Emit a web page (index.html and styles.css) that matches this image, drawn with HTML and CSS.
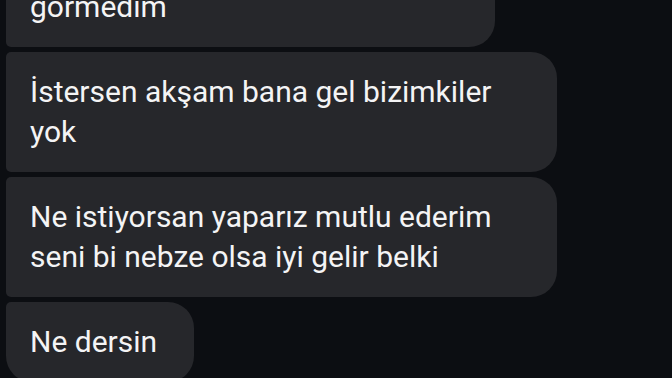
FILE: index.html
```html
<!DOCTYPE html>
<html lang="tr">
<head>
    <meta charset="UTF-8">
    <meta name="viewport" content="width=device-width, initial-scale=1.0">
    <title>Mesajlar</title>
    <link rel="stylesheet" href="styles.css">
</head>
<body>

    <!-- incoming messages, scrolled so the first one is cut off -->
    <div class="thread">
        <div class="bubble first">gormedim</div>
        <div class="bubble wide">İstersen akşam bana gel bizimkiler<br>yok</div>
        <div class="bubble wide">Ne istiyorsan yaparız mutlu ederim<br>seni bi nebze olsa iyi gelir belki</div>
        <div class="bubble last">Ne dersin</div>
    </div>

</body>
</html>
```

FILE: styles.css
```css
/* chat thread */
body {
    margin: 0;
    height: 100vh;
    overflow: hidden;
    background-color: #0c0e12;
    font-family: Roboto, "Noto Sans", sans-serif;
}

.thread {
    display: flex;
    flex-direction: column;
    align-items: flex-start;
    gap: 5px;
    margin-top: -33px;
    padding-left: 6px;
}

.bubble {
    box-sizing: border-box;
    padding: 20px 24px;
    background-color: #26272b;
    color: #f4f4f5;
    font-size: 30px;
    line-height: 40px;
    white-space: nowrap;
    border-radius: 5px 26px 26px 5px;
}

.bubble.first {
    width: 489px;
}

.bubble.wide {
    width: 551px;
}

.bubble.last {
    width: 188px;
    border-bottom-left-radius: 26px;
}
```
